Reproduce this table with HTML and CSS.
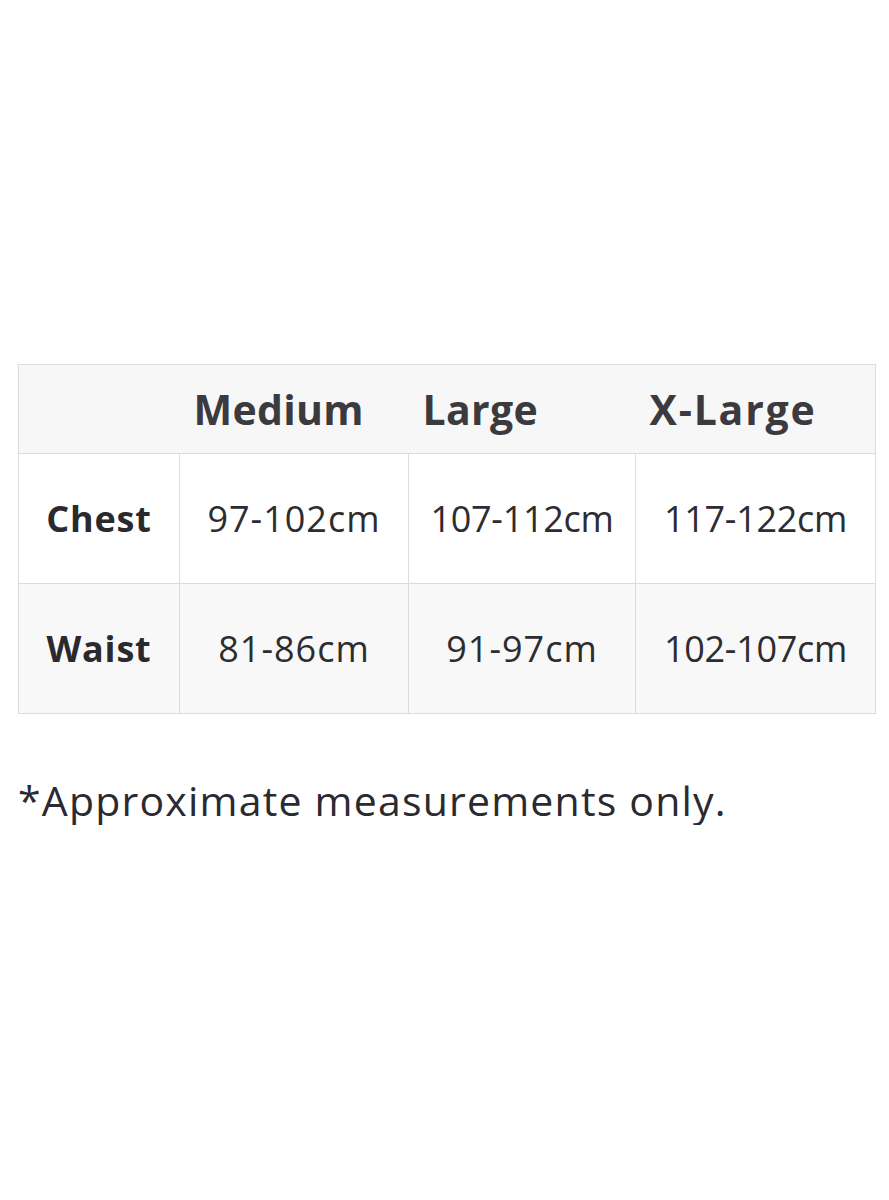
FILE: index.html
```html
<!DOCTYPE html>
<html>
<head>
<meta charset="utf-8">
<link rel="stylesheet" href="styles.css">
</head>
<body>
<main class="page">
  <table class="sizes">
    <colgroup>
      <col class="c-label">
      <col class="c-m">
      <col class="c-l">
      <col class="c-xl">
    </colgroup>
    <thead>
      <tr class="head-row">
        <th></th>
        <th>Medium</th>
        <th>Large</th>
        <th class="wide">X-Large</th>
      </tr>
    </thead>
    <tbody>
      <tr class="row-white">
        <th>Chest</th>
        <td>97-102cm</td>
        <td class="tight">107-112cm</td>
        <td class="tight">117-122cm</td>
      </tr>
      <tr class="row-gray">
        <th>Waist</th>
        <td>81-86cm</td>
        <td>91-97cm</td>
        <td class="tight">102-107cm</td>
      </tr>
    </tbody>
  </table>
  <p class="note">*Approximate measurements only.</p>
</main>
</body>
</html>
```

FILE: styles.css
```css
html, body {
  margin: 0;
  padding: 0;
  background: #ffffff;
}
.page {
  padding: 364px 14px 0 18px;
  font-family: "Open Sans", "Liberation Sans", sans-serif;
  color: #2c2c31;
}
.sizes {
  border-collapse: collapse;
  width: 857px;
  table-layout: fixed;
}
.c-label { width: 161px; }
.c-m { width: 229px; }
.c-l { width: 227px; }
.c-xl { width: 240px; }
.sizes td, .sizes th {
  border: 1px solid #dcdcdc;
  padding: 0;
}
.head-row {
  height: 89px;
  background: #f7f7f7;
}
.head-row th {
  text-align: left;
  padding-left: 14px;
  font-size: 41px;
  font-weight: 700;
  letter-spacing: 0.3px;
  color: #3b3b3f;
  border-left: none;
  border-right: none;
}
.head-row th.wide { letter-spacing: 1.8px; }
.head-row th:first-child { border-left: 1px solid #dcdcdc; }
.head-row th:last-child { border-right: 1px solid #dcdcdc; }
tbody tr { height: 130px; }
.row-white { background: #ffffff; }
.row-gray { background: #f8f8f8; }
tbody th {
  font-size: 36px;
  font-weight: 700;
  letter-spacing: 0.8px;
  color: #2a2a2e;
  text-align: center;
}
tbody td {
  font-size: 36px;
  font-weight: 400;
  letter-spacing: 1px;
  text-align: center;
  color: #2c2c31;
}
tbody td.tight { letter-spacing: -0.3px; }
.note {
  margin: 62px 0 0 0;
  font-size: 41px;
  line-height: 1.2;
  letter-spacing: 1.2px;
  color: #2a2a30;
}
```
